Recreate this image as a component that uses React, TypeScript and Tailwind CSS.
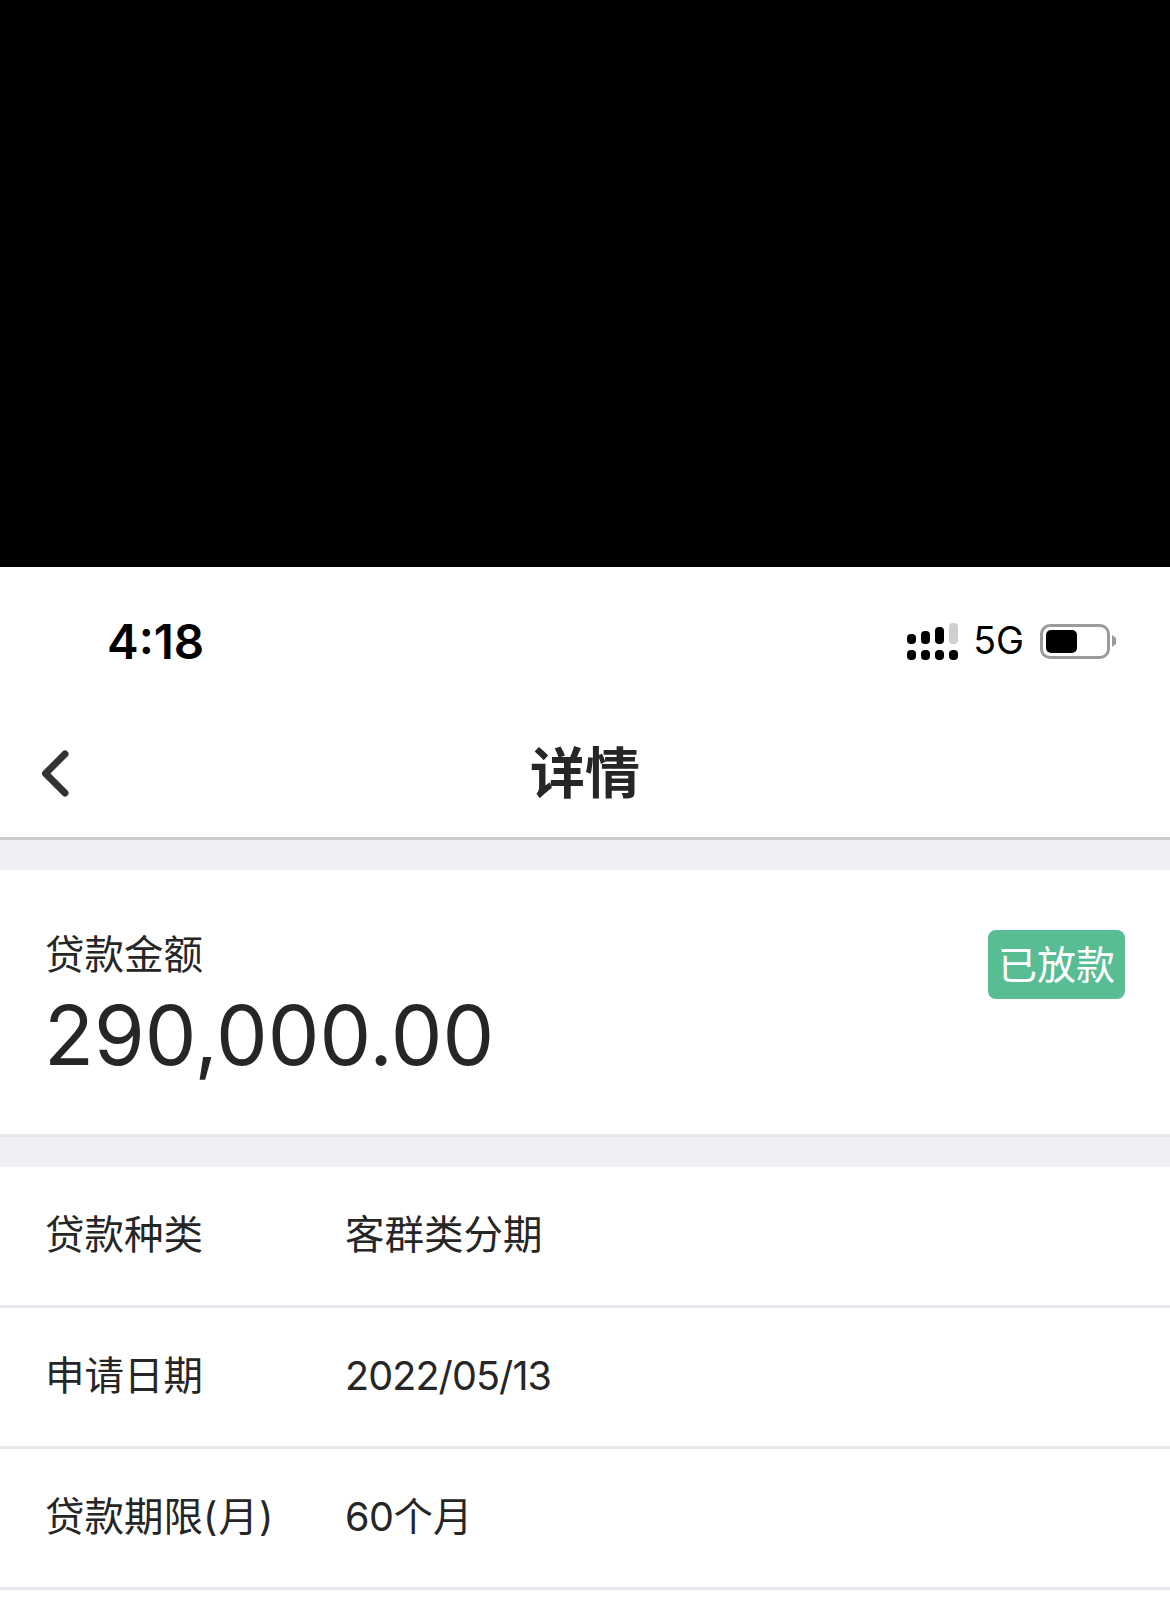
const font = { fontFamily: '"Inter", "Noto Sans CJK SC", sans-serif' };

function Signal() {
  const tops = [
    { h: 10, c: "#000" },
    { h: 13, c: "#000" },
    { h: 17, c: "#000" },
    { h: 21, c: "#cfcfcf" },
  ];
  return (
    <div className="flex gap-[5px] w-[51px]">
      {tops.map((t, i) => (
        <div key={i} className="flex flex-col justify-end gap-[6px] w-[9px] h-[37px]">
          <div className="w-[9px] rounded-[4px]" style={{ height: t.h, backgroundColor: t.c }} />
          <div className="w-[9px] h-[10px] rounded-[4px] bg-black" />
        </div>
      ))}
    </div>
  );
}

function Row({ label, value }: { label: React.ReactNode; value: React.ReactNode }) {
  return (
    <div className="flex items-center h-[141px] pl-[46px] pb-[1px] bg-white border-b-[3px] border-[#e6e6ec] text-[39.5px] text-[#262626]">
      <div className="w-[300px] -ml-[1px] whitespace-nowrap">{label}</div>
      <div className="whitespace-nowrap">{value}</div>
    </div>
  );
}

export default function App() {
  return (
    <div className="w-[1170px] h-[1623px] overflow-hidden bg-white" style={font}>
      <div className="h-[567px] bg-black" />
      <div className="flex items-center justify-between h-[148px] pl-[108px] pr-[53px]">
        <div className="text-[47.5px] font-semibold text-black leading-none -ml-[1px] mt-[2px]">4:18</div>
        <div className="flex items-center">
          <Signal />
          <div className="ml-[15px] text-[37.5px] text-black leading-none">5G</div>
          <div className="ml-[16px] flex items-center">
            <div className="w-[70px] h-[35px] rounded-[10px] border-[3px] border-[#9a9a9a] p-[3px]">
              <div className="w-[31px] h-full rounded-[5px] bg-black" />
            </div>
            <svg width="5" height="12" viewBox="0 0 5 12" className="ml-[2px]">
              <path d="M0 0 L4 3 L4 9 L0 12 Z" fill="#9a9a9a" />
            </svg>
          </div>
        </div>
      </div>
      <div className="relative flex items-center justify-center h-[125px] pb-[6px] border-b-[3px] border-[#cdcdcd]">
        <svg width="34" height="52" viewBox="0 0 34 52" className="absolute left-[39px] top-[35px]" fill="none" stroke="#333" strokeWidth="7" strokeLinecap="round" strokeLinejoin="round">
          <path d="M26 4 L6.5 23.5 L26 43" />
        </svg>
        <div className="text-[55px] font-bold text-[#262626] leading-none">详情</div>
      </div>
      <div className="h-[30px] bg-[#efeff4]" />
      <div className="flex items-start justify-between h-[267px] px-[46px] bg-white border-b-[3px] border-[#e6e6ec]">
        <div className="pt-[62px] -ml-[1px]">
          <div className="text-[39.5px] text-[#262626] leading-[46px]">贷款金额</div>
          <div className="text-[82px] text-[#262626] leading-[94px] mt-[11px] -ml-[1px]">290,000.00</div>
        </div>
        <div className="mt-[60px] -mr-[1px] flex items-center justify-center w-[137px] h-[69px] rounded-[8px] bg-[#58bd93] text-[39px] text-white leading-none">
          已放款
        </div>
      </div>
      <div className="h-[30px] bg-[#efeff4]" />
      <Row label="贷款种类" value="客群类分期" />
      <Row label="申请日期" value={<span className="tracking-[-0.9px]">2022/05/13</span>} />
      <Row label={<>贷款期限<span className="tracking-[1px]">(月)</span></>} value={<><span className="tracking-[-0.5px]">60</span>个月</>} />
    </div>
  );
}
